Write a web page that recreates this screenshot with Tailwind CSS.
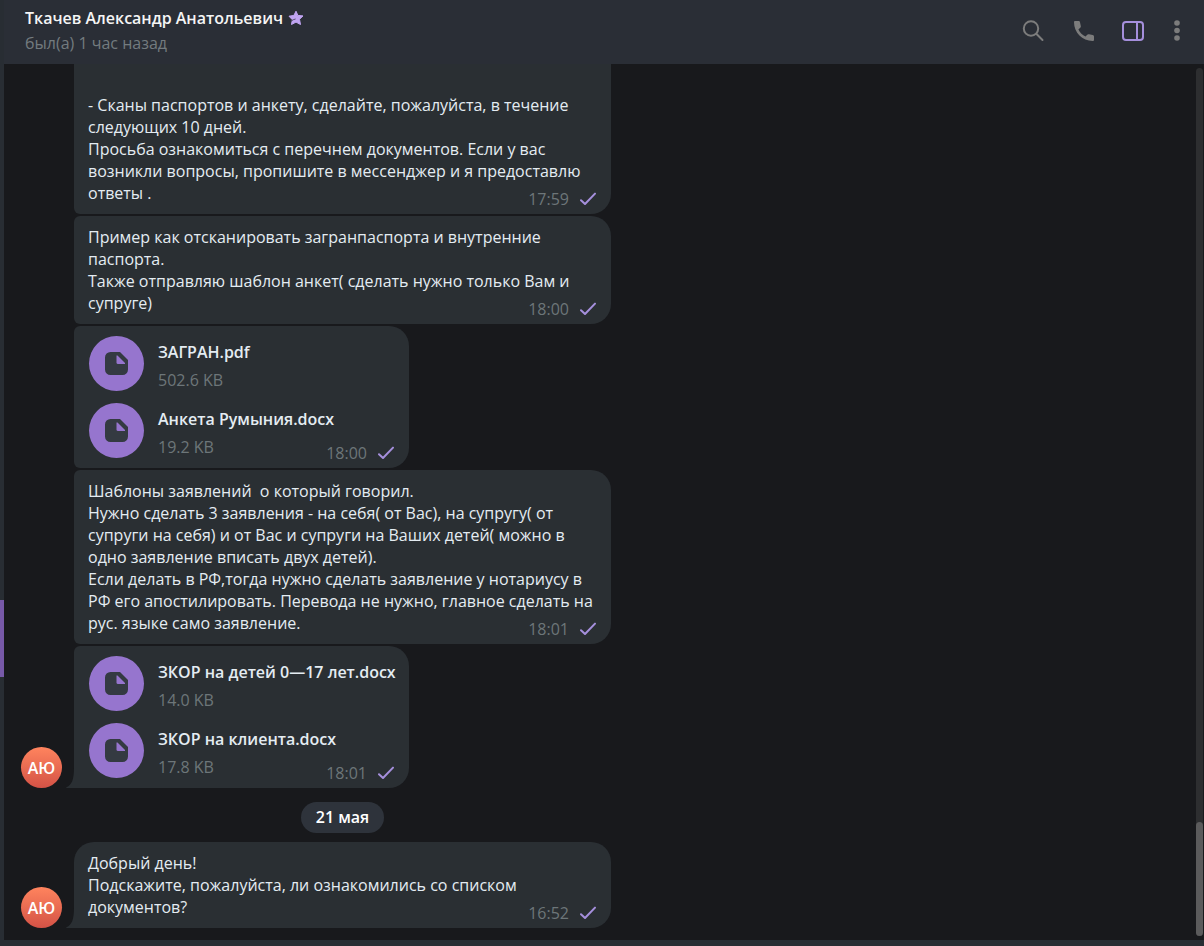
<!DOCTYPE html>
<html lang="ru">
<head>
  <meta charset="UTF-8" />
  <meta name="viewport" content="width=device-width, initial-scale=1" />
  <title>Ткачев Александр Анатольевич</title>
  <script src="https://cdn.jsdelivr.net/npm/@tailwindcss/browser@4"></script>
</head>
<body class="flex h-screen overflow-hidden bg-[#18191c] font-['Open_Sans','Noto_Sans',sans-serif] text-base leading-[22px] text-[#e4ecf2]">
  <!-- icons shared by the messages -->
  <svg class="hidden">
    <symbol id="check" viewBox="0 0 16 14">
      <path d="M1 8.2 5 12 15 1.6" fill="none" stroke="#a58fdc" stroke-width="2" stroke-linecap="round" stroke-linejoin="round" />
    </symbol>
    <symbol id="file" viewBox="0 0 23 23">
      <path d="M5.500 0h9.500l8 8v9.500a5.500 5.500 0 0 1-5.500 5.500h-12A5.500 5.500 0 0 1 0 17.500v-12A5.500 5.500 0 0 1 5.500 0z" fill="#343a42" />
      <path d="M11.500 3.500h1L20 11v1h-7a1.500 1.500 0 0 1-1.500-1.500z" fill="#9675ce" />
    </symbol>
    <symbol id="tail" viewBox="0 0 8 20">
      <path d="M8 0C8 11 6 17 .5 19.300 0 19.600 0 20 .8 20H8z" fill="#2a2f33" />
    </symbol>
  </svg>

  <!-- edge of the chat list -->
  <div class="flex w-1 shrink-0 flex-col justify-end bg-[#282d33] pb-[269px]">
    <div class="h-[77px] bg-[#7759a8]"></div>
  </div>

  <div class="flex min-w-0 flex-1 flex-col">
    <header class="flex h-16 shrink-0 items-center justify-between bg-[#2a2e36] pr-5 pb-[2px] pl-[21px]">
      <div class="flex flex-col gap-[3px] pb-px">
        <h1 class="flex items-center gap-[5px] font-semibold text-[#f5f5f5]">
          Ткачев Александр Анатольевич
          <svg class="size-4" viewBox="0 0 16 16">
            <path d="M8 1.200 9.900 5.400 15 5.900 11.500 9.300 12.500 14.500 8 12.100 3.500 14.500 4.300 9.700 1 6.200 5.900 5.400z" fill="#c0a4f2" stroke="#c0a4f2" stroke-linejoin="round" />
            <path d="M3.300 11C4.600 9.900 6 9.300 7.600 9" fill="none" stroke="#2a2e36" stroke-opacity=".7" stroke-width="1" />
          </svg>
        </h1>
        <p class="text-[#737b7f]">был(а) 1 час назад</p>
      </div>
      <div class="flex items-center">
        <button type="button" aria-label="Поиск" class="mr-[29px]">
          <svg class="size-[22px]" viewBox="0 0 22 22" fill="none" stroke="#7c7c7c" stroke-width="2" stroke-linecap="round">
            <circle cx="9" cy="8.500" r="7.200" />
            <path d="M14.300 13.800 20.500 20" />
          </svg>
        </button>
        <button type="button" aria-label="Позвонить" class="mr-[26px]">
          <svg class="size-[22px]" viewBox="0 0 22 22">
            <path d="M2.300 1H5.500C6.300 1 6.800 1.500 7 2.300L7.800 6C8 6.800 7.700 7.300 7.200 7.800L5.400 9.400C7 12.500 9.400 14.900 12.600 16.600L14.200 14.800C14.700 14.300 15.200 14.100 16 14.300L19.700 15C20.500 15.200 21 15.700 21 16.500V19.700C21 20.600 20.500 21 19.700 21C9.300 21 1 12.700 1 2.300C1 1.500 1.500 1 2.300 1Z" fill="#7c7c7c" />
          </svg>
        </button>
        <button type="button" aria-label="Информация" class="mr-[25px]">
          <svg class="size-6" viewBox="0 0 24 24" fill="none" stroke="#a58fdc" stroke-width="2">
            <rect x="2" y="3" width="20" height="18" rx="3" />
            <path d="M16 3v18" />
          </svg>
        </button>
        <button type="button" aria-label="Меню">
          <svg class="h-[22px] w-[14px]" viewBox="0 0 14 22" fill="#7c7c7c">
            <circle cx="7" cy="3" r="2.800" />
            <circle cx="7" cy="10.500" r="2.800" />
            <circle cx="7" cy="18" r="2.800" />
          </svg>
        </button>
      </div>
    </header>

    <div class="flex min-h-0 flex-1">
      <main class="flex flex-1 flex-col justify-end overflow-hidden pb-3 pl-[17px]">
        <section class="flex items-end gap-3">
          <div class="flex size-[41px] shrink-0 items-center justify-center rounded-full bg-linear-to-b from-[#ff845e] to-[#d45246] font-semibold text-white">АЮ</div>
          <div class="flex w-full max-w-[537px] flex-col items-start gap-[2px]">
            <article class="relative w-full rounded-l-md rounded-r-[20px] bg-[#2a2f33] px-[14px] py-[10px]">
              <p><br /><br />- Сканы паспортов и анкету, сделайте, пожалуйста, в течение следующих 10 дней.<br />Просьба ознакомиться с перечнем документов. Если у вас возникли вопросы, пропишите в мессенджер и я предоставлю ответы .</p>
              <div class="absolute right-[15px] bottom-1 flex items-center gap-[11px] text-[#6d7679]"><time>17:59</time><svg class="h-[14px] w-4"><use href="#check" /></svg></div>
            </article>

            <article class="relative w-full rounded-l-md rounded-r-[20px] bg-[#2a2f33] px-[14px] py-[10px]">
              <p>Пример как отсканировать загранпаспорта и внутренние паспорта.<br />Также отправляю шаблон анкет( сделать нужно только Вам и супруге)</p>
              <div class="absolute right-[15px] bottom-1 flex items-center gap-[11px] text-[#6d7679]"><time>18:00</time><svg class="h-[14px] w-4"><use href="#check" /></svg></div>
            </article>

            <article class="relative flex w-[335px] flex-col gap-3 rounded-l-md rounded-r-[20px] bg-[#2a2f33] px-[15px] py-[10px]">
              <div class="flex gap-[14px]">
                <div class="flex size-[55px] shrink-0 items-center justify-center rounded-full bg-[#9675ce]"><svg class="size-[23px]"><use href="#file" /></svg></div>
                <div class="flex flex-col justify-end gap-[6px] whitespace-nowrap">
                  <a href="#" class="font-semibold">ЗАГРАН.pdf</a>
                  <span class="text-[#6d7679]">502.6 KB</span>
                </div>
              </div>
              <div class="flex gap-[14px]">
                <div class="flex size-[55px] shrink-0 items-center justify-center rounded-full bg-[#9675ce]"><svg class="size-[23px]"><use href="#file" /></svg></div>
                <div class="flex flex-col justify-end gap-[6px] whitespace-nowrap">
                  <a href="#" class="font-semibold">Анкета Румыния.docx</a>
                  <span class="text-[#6d7679]">19.2 KB</span>
                </div>
              </div>
              <div class="absolute right-[15px] bottom-1 flex items-center gap-[11px] text-[#6d7679]"><time>18:00</time><svg class="h-[14px] w-4"><use href="#check" /></svg></div>
            </article>

            <article class="relative w-full rounded-l-md rounded-r-[20px] bg-[#2a2f33] px-[14px] py-[10px]">
              <p>Шаблоны заявлений&nbsp; о который говорил.<br />Нужно сделать 3 заявления - на себя( от Вас), на супругу( от супруги на себя) и от Вас и супруги на Ваших детей( можно в одно заявление вписать двух детей).<br />Если делать в РФ,тогда нужно сделать заявление у нотариусу в РФ его апостилировать. Перевода не нужно, главное сделать на рус. языке само заявление.</p>
              <div class="absolute right-[15px] bottom-1 flex items-center gap-[11px] text-[#6d7679]"><time>18:01</time><svg class="h-[14px] w-4"><use href="#check" /></svg></div>
            </article>

            <article class="relative flex w-[335px] flex-col gap-3 rounded-tl-md rounded-r-[20px] bg-[#2a2f33] px-[15px] py-[10px]">
              <svg class="absolute bottom-0 -left-2 h-5 w-2"><use href="#tail" /></svg>
              <div class="flex gap-[14px]">
                <div class="flex size-[55px] shrink-0 items-center justify-center rounded-full bg-[#9675ce]"><svg class="size-[23px]"><use href="#file" /></svg></div>
                <div class="flex flex-col justify-end gap-[6px] whitespace-nowrap">
                  <a href="#" class="font-semibold">ЗКОР на детей 0—17 лет.docx</a>
                  <span class="text-[#6d7679]">14.0 KB</span>
                </div>
              </div>
              <div class="flex gap-[14px]">
                <div class="flex size-[55px] shrink-0 items-center justify-center rounded-full bg-[#9675ce]"><svg class="size-[23px]"><use href="#file" /></svg></div>
                <div class="flex flex-col justify-end gap-[6px] whitespace-nowrap">
                  <a href="#" class="font-semibold">ЗКОР на клиента.docx</a>
                  <span class="text-[#6d7679]">17.8 KB</span>
                </div>
              </div>
              <div class="absolute right-[15px] bottom-1 flex items-center gap-[11px] text-[#6d7679]"><time>18:01</time><svg class="h-[14px] w-4"><use href="#check" /></svg></div>
            </article>
          </div>
        </section>

        <div class="mt-[14px] mb-[9px] ml-[53px] flex max-w-[537px] justify-center">
          <div class="rounded-full bg-[#2e333b] px-[15px] pt-1 pb-[5px] font-semibold text-white">21 мая</div>
        </div>

        <section class="flex items-end gap-3">
          <div class="flex size-[41px] shrink-0 items-center justify-center rounded-full bg-linear-to-b from-[#ff845e] to-[#d45246] font-semibold text-white">АЮ</div>
          <article class="relative w-full max-w-[537px] rounded-tl-[20px] rounded-r-[20px] bg-[#2a2f33] px-[14px] py-[10px]">
            <svg class="absolute bottom-0 -left-2 h-5 w-2"><use href="#tail" /></svg>
            <p>Добрый день!<br />Подскажите, пожалуйста, ли ознакомились со списком документов?</p>
            <div class="absolute right-[15px] bottom-1 flex items-center gap-[11px] text-[#6d7679]"><time>16:52</time><svg class="h-[14px] w-4"><use href="#check" /></svg></div>
          </article>
        </section>
      </main>

      <!-- scrollbar -->
      <div class="flex w-2 shrink-0 py-1 pr-px">
        <div class="flex w-full flex-col justify-end rounded-full bg-[#2d2e30]">
          <div class="h-[114px] rounded-full bg-[#5b5b5c]"></div>
        </div>
      </div>
    </div>

    <footer class="h-[6px] shrink-0 bg-[#282d33]"></footer>
  </div>
</body>
</html>
